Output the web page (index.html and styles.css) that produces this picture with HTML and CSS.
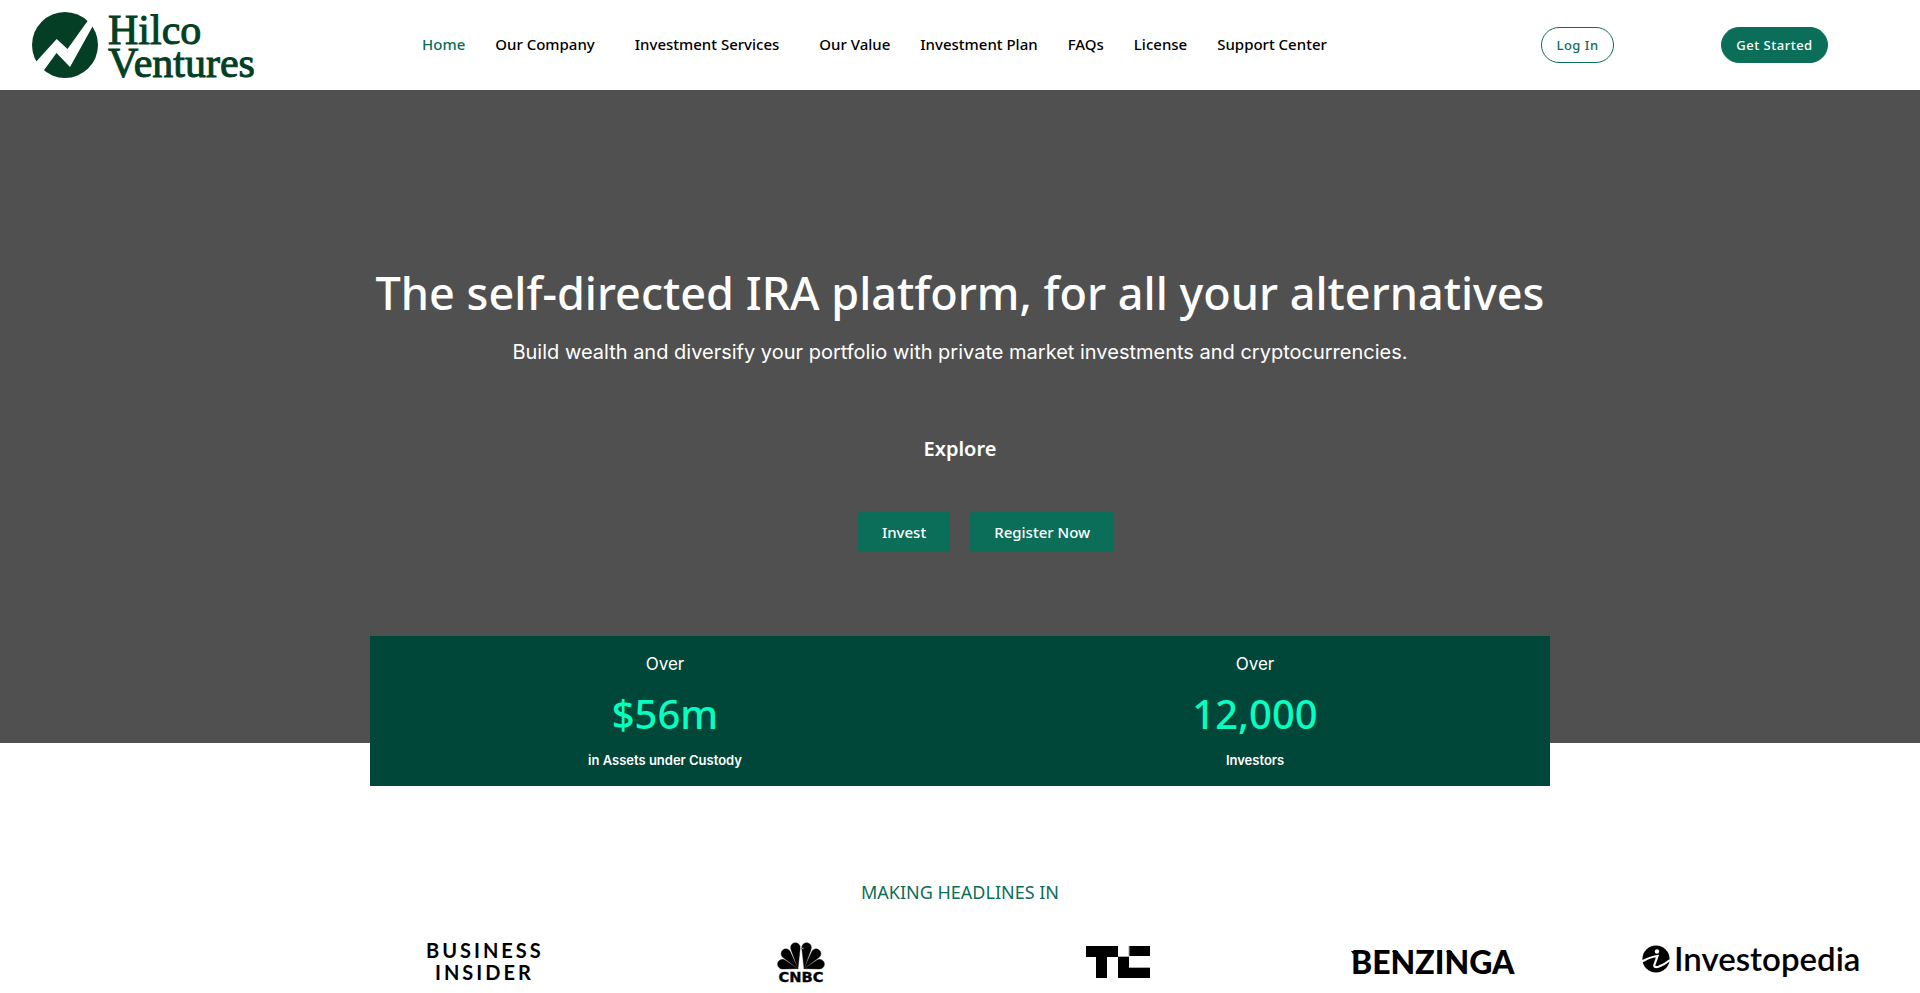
FILE: index.html
```html
<!DOCTYPE html>
<html lang="en">
<head>
    <meta charset="UTF-8">
    <meta name="viewport" content="width=device-width, initial-scale=1.0">
    <title>Hilco Ventures</title>
    <link rel="stylesheet" href="styles.css">
</head>
<body>
    <header class="header">
        <a href="#" class="brand" aria-label="Hilco Ventures">
            <svg width="228" height="72" viewBox="30 9 228 72">
                <circle cx="65" cy="45" r="33" fill="#043f25"/>
                <path d="M89 19 67.5 49 56.7 39 34 64 43 71.5 56.5 53 70 67 95 22Z" fill="#fff"/>
                <g class="brand-name">
                    <text x="108" y="44">Hilco</text>
                    <text x="108" y="77">Ventures</text>
                </g>
            </svg>
        </a>
        <nav>
            <ul class="menu">
                <li><a href="#" class="active">Home</a></li>
                <li class="has-sub"><a href="#">Our Company</a></li>
                <li class="has-sub"><a href="#">Investment Services</a></li>
                <li><a href="#">Our Value</a></li>
                <li><a href="#">Investment Plan</a></li>
                <li><a href="#">FAQs</a></li>
                <li><a href="#">License</a></li>
                <li><a href="#">Support Center</a></li>
            </ul>
        </nav>
        <a href="#" class="pill pill-outline">Log In</a>
        <a href="#" class="pill pill-solid">Get Started</a>
    </header>
    <main>
        <section class="hero">
            <h1>The self-directed IRA platform, for all your alternatives</h1>
            <p class="lead">Build wealth and diversify your portfolio with private market investments and cryptocurrencies.</p>
            <h2>Explore</h2>
            <div class="hero-buttons">
                <a href="#" class="btn">Invest</a>
                <a href="#" class="btn">Register Now</a>
            </div>
        </section>
        <section class="stats">
            <div class="stat">
                <p class="stat-over">Over</p>
                <p class="stat-number">$56m</p>
                <p class="stat-label">in Assets under Custody</p>
            </div>
            <div class="stat">
                <p class="stat-over">Over</p>
                <p class="stat-number">12,000</p>
                <p class="stat-label">Investors</p>
            </div>
        </section>
        <section class="headlines">
            <h3>MAKING HEADLINES IN</h3>
            <div class="logos">
                <svg class="insider" width="122" height="40" viewBox="0 0 122 40">
                    <text x="2" y="16">BUSINESS</text>
                    <text x="11" y="38">INSIDER</text>
                </svg>
                <svg class="cnbc" width="48" height="40" viewBox="0 0 144 120">
                    <defs>
                        <path id="f1" d="M0 0-14-45A14.5 14.5 0 1 1 14-45Z"/>
                        <path id="f2" d="M0 0-14-54A14.5 14.5 0 1 1 14-54Z"/>
                        <path id="f3" d="M0 0-14-60A14.5 14.5 0 1 1 14-60Z"/>
                    </defs>
                    <g transform="translate(63 80)">
                        <use href="#f1" transform="rotate(-74)"/>
                        <use href="#f2" transform="rotate(-39)"/>
                        <use href="#f3" transform="rotate(-7)"/>
                    </g>
                    <g transform="translate(81 80)">
                        <use href="#f1" transform="rotate(74)"/>
                        <use href="#f2" transform="rotate(39)"/>
                        <use href="#f3" transform="rotate(7)"/>
                    </g>
                    <path d="M79 22l-6-2 6-4Z" fill="#fff"/>
                    <text x="72" y="119" text-anchor="middle">CNBC</text>
                </svg>
                <svg width="64" height="40" viewBox="0 0 64 40">
                    <path d="M0 4H32V15H21V36H10V15H0ZM43 4H64V14H43ZM32 15H43V26H64V36H32Z"/>
                    <path d="M32 14.500H43V4M43 25.500H64" fill="none" stroke="#aaa"/>
                </svg>
                <svg class="benzinga" width="168" height="40" viewBox="0 0 168 40">
                    <text x="0" y="32">BENZINGA</text>
                    <path d="M0 9H5V12H2ZM41 9H47V12H43ZM95 9H101V12H97Z"/>
                </svg>
                <svg class="investopedia" width="220" height="40" viewBox="0 0 220 40">
                    <circle cx="14" cy="17" r="13.600"/>
                    <circle cx="15" cy="9.500" r="2.200" fill="#fff"/>
                    <path d="M0 19.500C5 17 9 14.500 15.500 14L12.500 22.500C11.500 25.500 14 25.500 17 24.500C21 23 25 20.500 28 18" fill="none" stroke="#fff" stroke-width="2.200"/>
                    <text x="32" y="29">Investopedia</text>
                </svg>
            </div>
        </section>
    </main>
</body>
</html>
```
FILE: styles.css
```css
* {
    box-sizing: border-box;
}
body {
    margin: 0;
    font-family: "Noto Sans", sans-serif;
    background-color: #ffffff;
    color: #000000;
}
h1, h2, h3, p, ul {
    margin: 0;
    padding: 0;
}
a {
    text-decoration: none;
}
svg {
    display: block;
    overflow: visible;
}
.header {
    display: grid;
    grid-template-columns: 22% 1fr 197px 197px;
    align-items: center;
    height: 90px;
    padding-right: 47px;
}
.brand {
    display: flex;
    padding-left: 30px;
}
.brand-name {
    font-family: "Liberation Serif", serif;
    font-size: 42px;
    fill: #043f25;
    stroke: #043f25;
    stroke-width: 1px;
}
.menu {
    display: flex;
    gap: 30px;
    padding: 0 0 2px 10px;
    list-style-type: none;
    font-size: 15px;
    line-height: 20px;
    font-weight: 500;
    white-space: nowrap;
}
.menu a {
    color: #000000;
}
.menu .active {
    color: #0b6e58;
}
.has-sub {
    padding-right: 10px;
}
.pill {
    justify-self: center;
    padding: 0 14px;
    border: 1px solid #0b6e58;
    border-radius: 18px;
    font-size: 13px;
    line-height: 34px;
    font-weight: 500;
    letter-spacing: 0.5px;
}
.pill-outline {
    color: #0b6e58;
}
.pill-solid {
    background-color: #0b6e58;
    color: #ffffff;
}
.hero {
    display: flex;
    flex-direction: column;
    align-items: center;
    padding: 173px 20px 191px;
    background-color: #505050;
    color: #ffffff;
    text-align: center;
}
.hero h1 {
    font-size: 45px;
    line-height: 60px;
    font-weight: 500;
}
.lead {
    margin-top: 13px;
    font-family: Inter, sans-serif;
    font-size: 20px;
    line-height: 32px;
}
.hero h2 {
    margin-top: 67px;
    font-size: 20px;
    line-height: 28px;
    font-weight: 600;
}
.hero-buttons {
    display: flex;
    gap: 20px;
    margin: 49px 0 0 52px;
}
.btn {
    padding: 0 24px;
    border-radius: 3px;
    background-color: #0b6e58;
    color: #ffffff;
    font-size: 15px;
    line-height: 40px;
    font-weight: 500;
}
.stats {
    position: relative;
    display: grid;
    grid-template-columns: 1fr 1fr;
    max-width: 1180px;
    margin: -107px auto 0;
    padding: 14px 0 16px;
    background-color: #00473a;
    color: #ffffff;
    font-family: Inter, sans-serif;
    text-align: center;
}
.stat-over {
    font-size: 17px;
    line-height: 28px;
}
.stat-number {
    margin: 10px 0;
    color: #06ffc0;
    font-family: "Noto Sans", sans-serif;
    font-size: 40px;
    line-height: 52px;
    font-weight: 500;
}
.stat-label {
    font-size: 13px;
    line-height: 20px;
    font-weight: 600;
}
.headlines h3 {
    margin-top: 92px;
    color: #0b6e58;
    font-size: 18px;
    line-height: 28px;
    font-weight: 400;
    text-align: center;
}
.logos {
    display: grid;
    grid-template-columns: repeat(5, 1fr);
    justify-items: center;
    padding: 36px 10px 8px 17%;
}
.insider {
    font-family: Lato, sans-serif;
    font-size: 20px;
    font-weight: 700;
    letter-spacing: 3px;
}
.cnbc {
    font-family: "DejaVu Sans", sans-serif;
    font-size: 44px;
    font-weight: 700;
    stroke: #000000;
    stroke-width: 1px;
}
.benzinga {
    font-family: Lato, sans-serif;
    font-size: 32px;
    font-weight: 900;
}
.investopedia {
    font-family: Lato, sans-serif;
    font-size: 33px;
    font-weight: 600;
}
```
